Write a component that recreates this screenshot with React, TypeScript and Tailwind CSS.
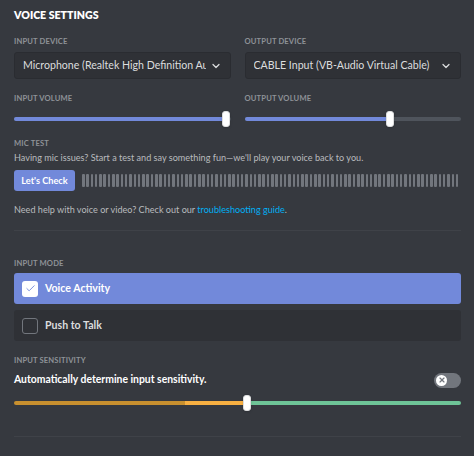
import { ChevronDown, Check, X } from "lucide-react";

const bars = Array.from({ length: 88 });

function Label({ children, className = "" }: { children: React.ReactNode; className?: string }) {
  return (
    <p className={`h-[10px] text-[7.6px] font-bold uppercase leading-[10px] tracking-[0.02em] text-[#8e9297] ${className}`}>
      {children}
    </p>
  );
}

function Select({ value }: { value: string }) {
  return (
    <div className="mt-[6px] flex h-[27px] items-center rounded-[3px] border border-[#2a2c31] bg-[#2f3136] pl-[8px] pr-[8px] text-[10.6px] text-[#dcddde]">
      <span className="flex-1 overflow-hidden whitespace-nowrap">{value}</span>
      <ChevronDown className="ml-1 shrink-0 text-[#dcddde]" size={12} strokeWidth={2.5} aria-hidden />
    </div>
  );
}

function Slider({ pct }: { pct: number }) {
  return (
    <div className="relative mt-[8px] h-[16px]">
      <div className="absolute left-0 right-0 top-[6px] h-[4px] rounded-full bg-[#4f545c]" />
      <div className="absolute left-0 top-[6px] h-[4px] rounded-full bg-[#7289da]" style={{ width: `${pct}%` }} />
      <div
        className="absolute top-0 h-[16px] w-[8px] -translate-x-1/2 rounded-[3px] border border-[#dcddde] bg-white shadow"
        style={{ left: `${pct}%` }}
      />
    </div>
  );
}

export default function App() {
  return (
    <div
      className="h-[456px] w-[474px] overflow-hidden bg-[#36393f] pl-[14px] pr-[13px]"
      style={{ fontFamily: "Lato, 'Open Sans', sans-serif" }}
    >
      <h2 className="mt-[7px] h-[16px] text-[10.6px] font-extrabold uppercase leading-[16px] text-white">
        Voice Settings
      </h2>

      <div className="grid grid-cols-2 gap-x-[14px]">
        <div>
          <Label className="mt-[13px]">Input Device</Label>
          <Select value="Microphone (Realtek High Definition Audio)" />
          <Label className="mt-[14px]">Input Volume</Label>
          <Slider pct={98} />
        </div>
        <div>
          <Label className="mt-[13px]">Output Device</Label>
          <Select value="CABLE Input (VB-Audio Virtual Cable)" />
          <Label className="mt-[14px]">Output Volume</Label>
          <Slider pct={67} />
        </div>
      </div>

      <Label className="mt-[11px]">Mic Test</Label>
      <p className="mt-[3px] h-[14px] text-[9.1px] leading-[14px] text-[#b9bbbe]">
        Having mic issues? Start a test and say something fun—we'll play your voice back to you.
      </p>
      <div className="mt-[5px] flex h-[21px] items-center gap-[7px]">
        <button className="h-[21px] w-[61px] shrink-0 rounded-[3px] bg-[#7289da] text-[9.2px] font-bold text-white">
          Let's Check
        </button>
        <div className="flex h-[13px] flex-1 justify-between pr-[2px]">
          {bars.map((_, i) => (
            <span key={i} className="h-full w-[2.5px] rounded-[1px] bg-[#72767d]" />
          ))}
        </div>
      </div>
      <p className="mt-[12px] h-[14px] text-[9.1px] leading-[14px] text-[#b9bbbe]">
        Need help with voice or video? Check out our <span className="text-[#00b0f4]">troubleshooting guide</span>.
      </p>
      <div className="mt-[13px] h-px bg-[#3f4248]" />

      <Label className="mt-[27px]">Input Mode</Label>
      <div className="mt-[5px] flex h-[31px] items-center gap-[7px] rounded-[3px] bg-[#7289da] px-[8px]">
        <span className="flex h-[16px] w-[16px] items-center justify-center rounded-[3px] bg-white">
          <Check className="text-[#7289da]" size={11} strokeWidth={2} aria-hidden />
        </span>
        <span className="text-[10.6px] font-bold text-white">Voice Activity</span>
      </div>
      <div className="mt-[6px] flex h-[31px] items-center gap-[7px] rounded-[3px] bg-[#2f3136] px-[8px]">
        <span className="h-[16px] w-[16px] rounded-[3px] border border-[#72767d]" />
        <span className="text-[10.6px] font-bold text-[#dcddde]">Push to Talk</span>
      </div>

      <Label className="mt-[14px]">Input Sensitivity</Label>
      <div className="mt-[7px] flex h-[16px] items-center justify-between">
        <span className="text-[10.4px] font-bold text-white">Automatically determine input sensitivity.</span>
        <span className="flex h-[15px] w-[27px] items-center rounded-full bg-[#72767d] pl-[2px]">
          <span className="flex h-[11px] w-[11px] items-center justify-center rounded-full bg-white">
            <X className="text-[#72767d]" size={8} strokeWidth={3.5} aria-hidden />
          </span>
        </span>
      </div>
      <div className="relative mt-[7px] h-[16px]">
        <div className="absolute top-[6px] flex h-[4px] w-full overflow-hidden rounded-full">
          <span className="w-[171px] bg-[#c8902f]" />
          <span className="w-[61px] bg-[#f8b042]" />
          <span className="flex-1 bg-[#6ec497]" />
        </div>
        <div className="absolute left-[229px] top-0 h-[16px] w-[8px] rounded-[3px] border border-[#dcddde] bg-white shadow" />
      </div>
      <div className="mt-[25px] h-px bg-[#3f4248]" />
    </div>
  );
}
